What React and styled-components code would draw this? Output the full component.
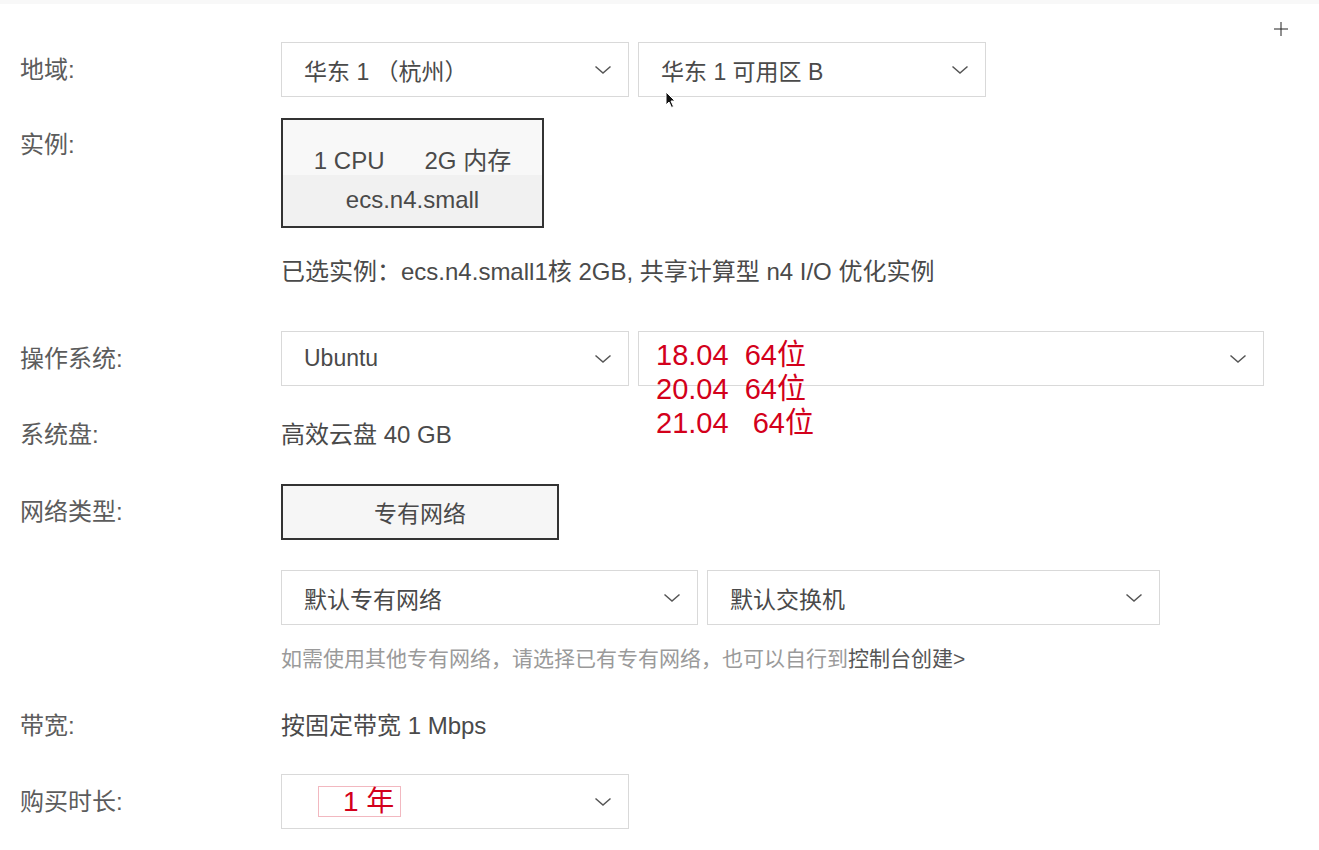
import React from 'react'
import styled, { createGlobalStyle } from 'styled-components'

const GlobalStyle = createGlobalStyle`
  body {
    margin: 0;
    background: #fff;
    font-family: "Liberation Sans", "Noto Sans CJK SC", sans-serif;
  }
`

const Page = styled.div`
  position: relative;
  width: 1319px;
  height: 850px;
  overflow: hidden;
  background: #fff;
  border-top: 4px solid #f8f8f8;
  box-sizing: border-box;
  padding-top: 38px;
`

const Row = styled.div`
  display: grid;
  grid-template-columns: 261px 1fr;
  padding-left: 20px;
  margin-top: ${(p) => p.$mt || 0}px;
  align-items: ${(p) => (p.$top ? 'start' : 'center')};
`

const Label = styled.div`
  font-size: 24px;
  line-height: 24px;
  color: #5c5c5c;
  padding-top: ${(p) => p.$pt || 0}px;
`

const Controls = styled.div`
  display: flex;
  gap: 9px;
`

const Select = styled.div`
  position: relative;
  box-sizing: border-box;
  width: ${(p) => p.$w}px;
  height: 55px;
  border: 1.5px solid #d9d9d9;
  background: #fff;
  display: flex;
  align-items: center;
  justify-content: space-between;
  padding: 0 16px 0 22px;
  font-size: 23px;
  color: #4a4a4a;
`

const Chevron = () => (
  <svg width="18" height="10" viewBox="0 0 18 10">
    <polyline points="1.5,1.5 9,8 16.5,1.5" fill="none" stroke="#555" strokeWidth="1.5" />
  </svg>
)

const InstanceCard = styled.div`
  box-sizing: border-box;
  width: 263px;
  height: 110px;
  border: 2px solid #333;
  background: linear-gradient(#f8f8f8 0 52%, #f1f1f1 52% 100%);
  display: flex;
  flex-direction: column;
  align-items: center;
  justify-content: center;
  gap: 14px;
  color: #4a4a4a;
  padding-top: 14px;
`

const Spec = styled.div`
  display: flex;
  gap: 40px;
  font-size: 24px;
  line-height: 26px;
`

const Model = styled.div`
  font-size: 24px;
  line-height: 24px;
`

const Value = styled.div`
  font-size: 24px;
  line-height: 24px;
  color: #4a4a4a;
`

const Hint = styled.div`
  font-size: 21px;
  line-height: 22px;
  color: #9a9a9a;

  b {
    font-weight: normal;
    color: #555;
  }
`

const ChoiceBox = styled.div`
  box-sizing: border-box;
  width: 278px;
  height: 56px;
  border: 2px solid #333;
  background: #f6f6f6;
  display: flex;
  align-items: center;
  justify-content: center;
  font-size: 23px;
  color: #4a4a4a;
`

const VersionList = styled.div`
  position: absolute;
  left: 17px;
  top: 6px;
  display: flex;
  flex-direction: column;
  color: #d3001b;
  font-size: 29px;
  line-height: 34px;
  white-space: pre;
`

const YearTag = styled.span`
  margin-left: 14px;
  width: 83px;
  height: 31px;
  box-sizing: border-box;
  border: 1px solid #f2b8c0;
  color: #d3001b;
  font-size: 28px;
  line-height: 29px;
  padding-left: 24px;
`

const Pointer = styled.svg`
  position: absolute;
  left: 665px;
  top: 87px;
`

const Cross = styled.svg`
  position: absolute;
  left: 1274px;
  top: 18px;
`

const App = () => {
  return (
    <>
      <GlobalStyle />
      <Page>
        <Row>
          <Label>地域:</Label>
          <Controls>
            <Select $w={348}>
              华东 1 （杭州）
              <Chevron />
            </Select>
            <Select $w={348}>
              华东 1 可用区 B
              <Chevron />
            </Select>
          </Controls>
        </Row>

        <Row $mt={21} $top>
          <Label $pt={15}>实例:</Label>
          <InstanceCard>
            <Spec>
              <span>1 CPU</span>
              <span>2G 内存</span>
            </Spec>
            <Model>ecs.n4.small</Model>
          </InstanceCard>
        </Row>

        <Row $mt={32}>
          <span />
          <Value>已选实例：ecs.n4.small1核 2GB, 共享计算型 n4 I/O 优化实例</Value>
        </Row>

        <Row $mt={47}>
          <Label>操作系统:</Label>
          <Controls>
            <Select $w={348}>
              Ubuntu
              <Chevron />
            </Select>
            <Select $w={626}>
              <VersionList>
                <span>{'18.04  64位'}</span>
                <span>{'20.04  64位'}</span>
                <span>{'21.04   64位'}</span>
              </VersionList>
              <span />
              <Chevron />
            </Select>
          </Controls>
        </Row>

        <Row $mt={37}>
          <Label>系统盘:</Label>
          <Value>高效云盘 40 GB</Value>
        </Row>

        <Row $mt={37}>
          <Label>网络类型:</Label>
          <ChoiceBox>专有网络</ChoiceBox>
        </Row>

        <Row $mt={30}>
          <span />
          <Controls>
            <Select $w={417}>
              默认专有网络
              <Chevron />
            </Select>
            <Select $w={453}>
              默认交换机
              <Chevron />
            </Select>
          </Controls>
        </Row>

        <Row $mt={23}>
          <span />
          <Hint>
            如需使用其他专有网络，请选择已有专有网络，也可以自行到<b>控制台创建&gt;</b>
          </Hint>
        </Row>

        <Row $mt={44}>
          <Label>带宽:</Label>
          <Value>按固定带宽 1 Mbps</Value>
        </Row>

        <Row $mt={36}>
          <Label>购买时长:</Label>
          <Select $w={348}>
            <YearTag>1 年</YearTag>
            <Chevron />
          </Select>
        </Row>

        <Pointer width="12" height="18" viewBox="0 0 12 18">
          <path d="M1 1 L1 14 L4 11 L6.5 16.5 L8.5 15.5 L6 10 L10 10 Z" fill="#111" stroke="#fff" strokeWidth="1" />
        </Pointer>
        <Cross width="14" height="14" viewBox="0 0 14 14">
          <path d="M7 0 V14 M0 7 H14" stroke="#222" strokeWidth="1" />
        </Cross>
      </Page>
    </>
  )
}

export default App
